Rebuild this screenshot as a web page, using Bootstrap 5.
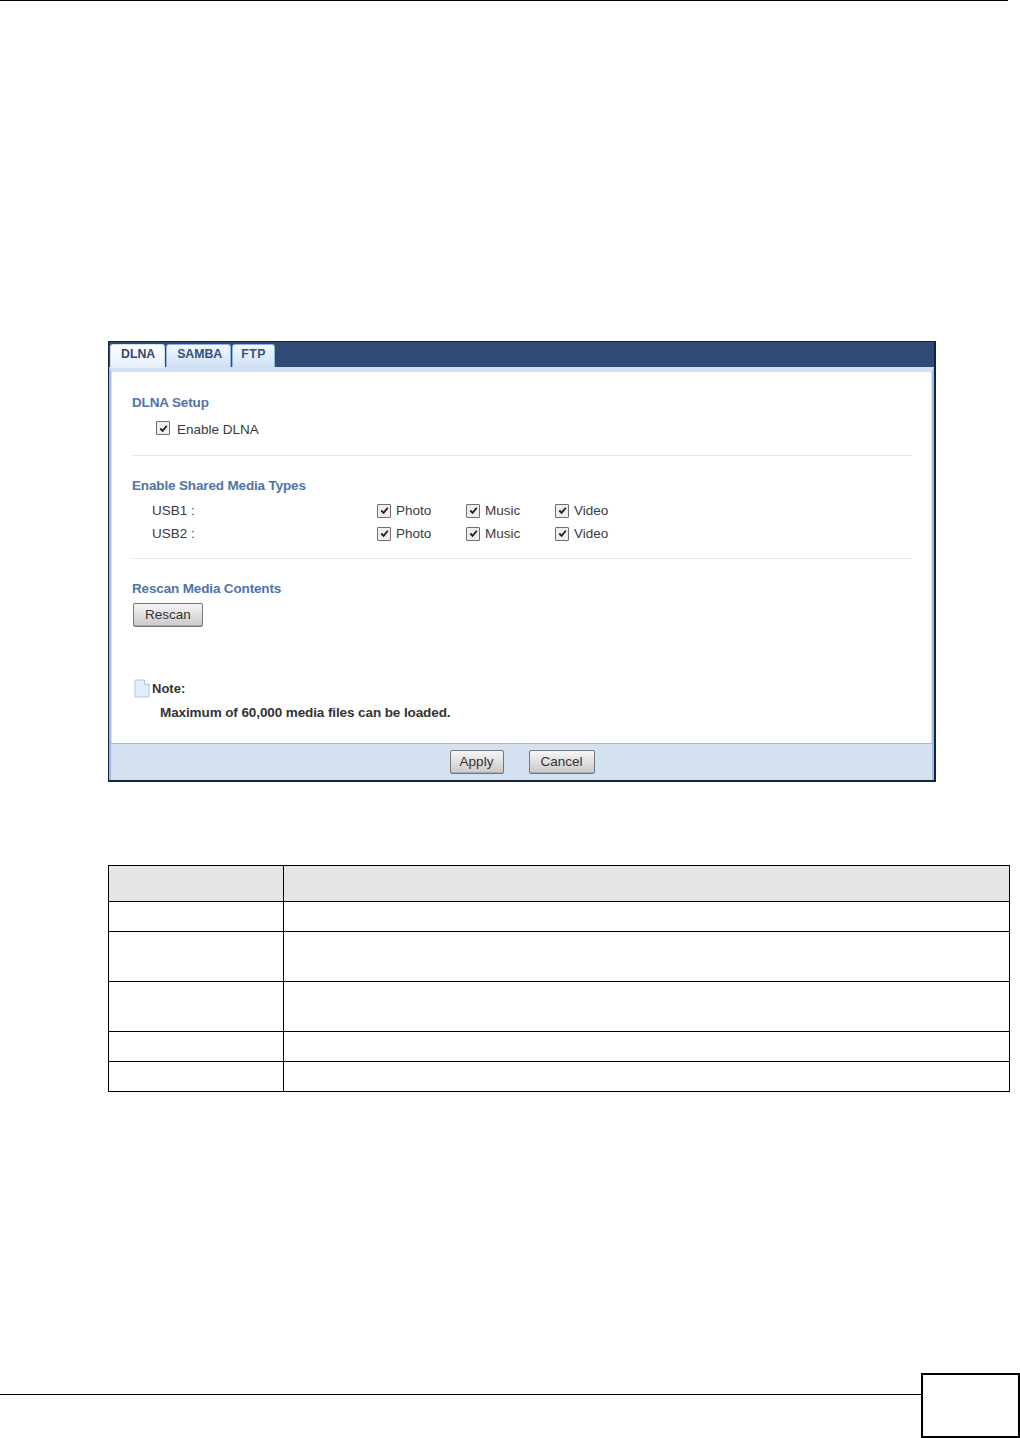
<!DOCTYPE html>
<html lang="en">
<head>
<meta charset="utf-8">
<title>DLNA</title>
<link rel="stylesheet" href="https://cdn.jsdelivr.net/npm/bootstrap@5.3.0/dist/css/bootstrap.min.css">
<style>
html,body{margin:0;background:#fff;}
body{font-family:"Liberation Sans",Arial,sans-serif;font-size:13.5px;color:#3a3a3a;}
.sheet{width:1020px;height:1438px;}
.top-rule{width:1008px;height:2px;background:#000;}
.win{width:828px;height:441px;margin:340px 0 0 108px;border:1px solid #14233f;border-right-width:2px;border-bottom-width:2px;background:#2f4a74;}
.win-tabs{height:25px;padding:2px 0 0 1px;gap:1px;border:0;flex-wrap:nowrap;}
.win-tabs .nav-link{height:23px;margin:0;padding:0 8px 0 10px;font-size:12.3px;line-height:18px;font-weight:700;color:#34517f;border:1px solid #8fb2dc;border-bottom:0;border-radius:3px 3px 0 0;background:linear-gradient(#f4f9fe,#cfe0f5);}
.win-tabs .nav-link.active{padding:0 9px 0 10px;color:#2f4a74;background:linear-gradient(#fff,#e4eefa);border:1px solid #d5dde8;border-bottom:0;height:24px;}
.win-tabs .nav-link.tab-short{padding:0 8px;letter-spacing:.5px;}
.win-body{height:413px;border:solid #9dbbe6;border-width:5px 2px 0 2px;border-top-color:#cfe0f6;background:#fff;}
.win-main{height:371px;padding:0 20px;border-left:1px solid #d4e2f5;border-right:1px solid #d4e2f5;}
.sec-title{font-size:13.5px;line-height:16px;font-weight:700;color:#4f74a8;letter-spacing:-.15px;}
.check-row{display:flex;align-items:center;gap:7px;line-height:16px;margin:11px 0 0 24px;}
.win .form-check-input{width:14px;height:14px;margin-top:-2px;flex:none;border:1px solid #6f6f6f;border-radius:1px;background-color:#eeeeee;background-size:11px;box-shadow:none;}
.win .check-row .form-check-input{margin-top:-4px;}
.win .form-check-input:checked{background-color:#eeeeee;border-color:#6f6f6f;background-image:url("data:image/svg+xml,%3csvg xmlns='http://www.w3.org/2000/svg' viewBox='0 0 12 12'%3e%3cpath fill='none' stroke='%23222' stroke-width='2' d='M2.5 6l2.5 2.6 4.6-5.6'/%3e%3c/svg%3e");}
.dash{border-top:1px dotted #cfcfcf;margin:0;opacity:1;width:779px;}
.usb-row{display:flex;align-items:center;height:23px;padding-left:20px;}
.usb-name{width:225px;}
.usb-opt{width:89px;gap:5px;}
.btn-gray{height:24px;padding:0;font-size:13.5px;line-height:22px;color:#333;border:1px solid #777;border-radius:2px;background:linear-gradient(#f6f6f6,#c9c9c9);box-shadow:inset 0 -1px 0 #aaa;}
.btn-gray:hover{color:#333;border-color:#777;background:linear-gradient(#f6f6f6,#c9c9c9);}
.note-head{font-size:13px;line-height:16px;font-weight:700;color:#333;gap:2px;padding-left:2px;}
.note-text{font-size:13.5px;line-height:16px;font-weight:700;color:#333;letter-spacing:-.1px;padding-left:28px;}
.win-foot{height:37px;gap:25px;background:#d3e1f0;border-top:1px solid #9dbbe0;padding-left:1px;}
.param{width:902px;height:226px;margin:83px 0 0 108px;border-collapse:collapse;table-layout:fixed;}
.param th,.param td{border:1px solid #000;padding:0;}
.param th{background:#e5e5e5;height:36px;}
.param .one{height:30px;}
.param .two{height:50px;}
.foot-bar{margin-top:281px;height:65px;}
.foot-line{flex:1;height:1px;background:#000;margin-top:21px;}
.foot-box{width:99px;height:65px;border:2px solid #000;}
</style>
</head>
<body>
<div class="sheet d-flex flex-column">
  <div class="top-rule"></div>
  <div class="win">
    <ul class="nav nav-tabs win-tabs">
      <li class="nav-item"><a class="nav-link active" href="#">DLNA</a></li>
      <li class="nav-item"><a class="nav-link" href="#">SAMBA</a></li>
      <li class="nav-item"><a class="nav-link tab-short" href="#">FTP</a></li>
    </ul>
    <div class="win-body">
      <div class="win-main">
        <div class="sec-title" style="padding-top:23px">DLNA Setup</div>
        <label class="check-row"><input class="form-check-input" type="checkbox" checked> Enable DLNA</label>
        <hr class="dash" style="margin-top:17px">
        <div class="sec-title" style="margin-top:22px">Enable Shared Media Types</div>
        <div style="margin-top:6px">
          <div class="usb-row"><span class="usb-name">USB1 :</span>
            <label class="usb-opt d-flex align-items-center"><input class="form-check-input" type="checkbox" checked>Photo</label>
            <label class="usb-opt d-flex align-items-center"><input class="form-check-input" type="checkbox" checked>Music</label>
            <label class="usb-opt d-flex align-items-center"><input class="form-check-input" type="checkbox" checked>Video</label>
          </div>
          <div class="usb-row"><span class="usb-name">USB2 :</span>
            <label class="usb-opt d-flex align-items-center"><input class="form-check-input" type="checkbox" checked>Photo</label>
            <label class="usb-opt d-flex align-items-center"><input class="form-check-input" type="checkbox" checked>Music</label>
            <label class="usb-opt d-flex align-items-center"><input class="form-check-input" type="checkbox" checked>Video</label>
          </div>
        </div>
        <hr class="dash" style="margin-top:12px">
        <div class="sec-title" style="margin-top:22px">Rescan Media Contents</div>
        <button class="btn btn-gray d-block" style="width:70px;margin:6px 0 0 1px" type="button">Rescan</button>
        <div class="note-head d-flex align-items-center" style="margin-top:52px">
          <svg width="16" height="19" viewBox="0 0 16 19" aria-hidden="true"><path d="M1 1h9.500L15 5.500V18H1z" fill="#e3eefa" stroke="#a9c5e6"/><path d="M10.500 1v4.500H15" fill="#fff" stroke="#a9c5e6"/></svg>
          <span>Note:</span>
        </div>
        <div class="note-text" style="margin-top:7px">Maximum of 60,000 media files can be loaded.</div>
      </div>
      <div class="win-foot d-flex justify-content-center align-items-center">
        <button class="btn btn-gray" style="width:54px" type="button">Apply</button>
        <button class="btn btn-gray" style="width:66px" type="button">Cancel</button>
      </div>
    </div>
  </div>
  <table class="param">
    <colgroup><col style="width:175px"><col></colgroup>
    <thead><tr><th></th><th></th></tr></thead>
    <tbody>
      <tr class="one"><td></td><td></td></tr>
      <tr class="two"><td></td><td></td></tr>
      <tr class="two"><td></td><td></td></tr>
      <tr class="one"><td></td><td></td></tr>
      <tr class="one"><td></td><td></td></tr>
    </tbody>
  </table>
  <div class="foot-bar d-flex">
    <div class="foot-line"></div>
    <div class="foot-box"></div>
  </div>
</div>
<script src="https://cdn.jsdelivr.net/npm/bootstrap@5.3.0/dist/js/bootstrap.bundle.min.js"></script>
</body>
</html>
